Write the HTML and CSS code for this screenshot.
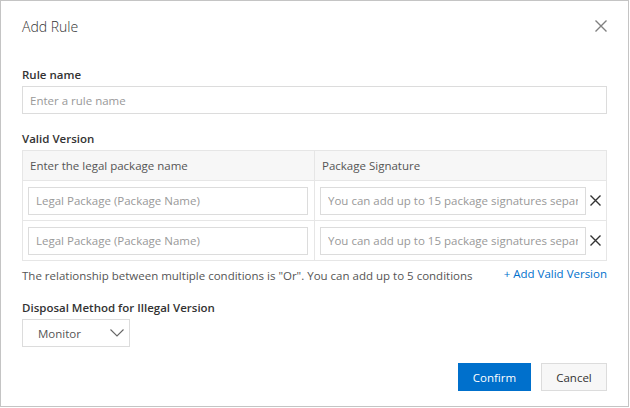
FILE: index.html
```html
<!DOCTYPE html>
<html lang="en">
<head>
    <meta charset="UTF-8">
    <title>Add Rule</title>
    <link rel="stylesheet" href="styles.css">
</head>
<body>
    <div class="dialog">
        <!-- Header -->
        <div class="dialog-header">
            <span class="dialog-title">Add Rule</span>
            <svg class="close-icon" width="12" height="12" viewBox="0 0 12 12">
                <path d="M0.5 0.5 L11.5 11.5 M11.5 0.5 L0.5 11.5" stroke="#808080" stroke-width="1.4" fill="none"/>
            </svg>
        </div>

        <!-- Body -->
        <div class="dialog-body">
            <div class="form-label">Rule name</div>
            <input class="text-input" type="text" placeholder="Enter a rule name">

            <div class="form-label label-version">Valid Version</div>
            <div class="version-table">
                <div class="table-row table-head">
                    <div class="cell cell-left">Enter the legal package name</div>
                    <div class="cell cell-right">Package Signature</div>
                </div>
                <div class="table-row">
                    <div class="cell cell-left">
                        <input class="text-input" type="text" placeholder="Legal Package (Package Name)">
                    </div>
                    <div class="cell cell-right">
                        <input class="text-input" type="text" placeholder="You can add up to 15 package signatures separated by commas">
                        <svg class="row-remove" width="11" height="11" viewBox="0 0 11 11">
                            <path d="M0.5 0.5 L10.5 10.5 M10.5 0.5 L0.5 10.5" stroke="#333" stroke-width="1.4" fill="none"/>
                        </svg>
                    </div>
                </div>
                <div class="table-row">
                    <div class="cell cell-left">
                        <input class="text-input" type="text" placeholder="Legal Package (Package Name)">
                    </div>
                    <div class="cell cell-right">
                        <input class="text-input" type="text" placeholder="You can add up to 15 package signatures separated by commas">
                        <svg class="row-remove" width="11" height="11" viewBox="0 0 11 11">
                            <path d="M0.5 0.5 L10.5 10.5 M10.5 0.5 L0.5 10.5" stroke="#333" stroke-width="1.4" fill="none"/>
                        </svg>
                    </div>
                </div>
            </div>
            <div class="help-row">
                <span class="help-text">The relationship between multiple conditions is "Or". You can add up to 5 conditions</span>
                <a class="add-link" href="#">+ Add Valid Version</a>
            </div>

            <div class="form-label label-disposal">Disposal Method for Illegal Version</div>
            <div class="select-box">
                <span>Monitor</span>
                <svg width="14" height="8" viewBox="0 0 14 8">
                    <path d="M0.5 0.5 L7 7 L13.5 0.5" stroke="#666" stroke-width="1.1" fill="none"/>
                </svg>
            </div>
        </div>

        <!-- Footer -->
        <div class="dialog-footer">
            <button class="btn btn-primary">Confirm</button>
            <button class="btn btn-normal">Cancel</button>
        </div>
    </div>
</body>
</html>
```

FILE: styles.css
```css
/* General Styles */
html, body {
    margin: 0;
    padding: 0;
    background: #fff;
}
body {
    font-family: "Open Sans", "Noto Sans", sans-serif;
    font-size: 11.5px;
    color: #333;
}

/* Dialog */
.dialog {
    width: 629px;
    height: 407px;
    box-sizing: border-box;
    border: 1px solid #c4c4c4;
    background: #fff;
    display: flex;
    flex-direction: column;
}
.dialog-header {
    display: flex;
    justify-content: space-between;
    align-items: flex-start;
    padding: 16px 21px 0 21px;
    height: 37px;
}
.dialog-title {
    font-size: 14px;
    line-height: 20px;
    font-weight: 300;
    color: #333;
}
.close-icon {
    margin-top: 3px;
}

/* Body */
.dialog-body {
    flex: 1;
    padding: 12px 21px 0 21px;
    display: flex;
    flex-direction: column;
    align-items: flex-start;
}
.form-label {
    font-weight: 600;
    line-height: 18px;
    margin-bottom: 2px;
}
.label-version {
    margin-top: 16px;
    margin-bottom: 2px;
}
.label-disposal {
    margin-top: 14px;
}
.text-input {
    box-sizing: border-box;
    width: 100%;
    height: 28px;
    border: 1px solid #dcdcdc;
    padding: 0 7px;
    font-family: inherit;
    font-size: 11.5px;
    color: #333;
    outline: none;
}
.text-input::placeholder {
    color: #999;
}

/* Version table */
.version-table {
    width: 100%;
    border: 1px solid #e6e6e6;
    box-sizing: border-box;
}
.table-row {
    display: flex;
    height: 39px;
    border-top: 1px solid #e6e6e6;
}
.table-row.table-head {
    height: 29px;
    border-top: none;
    background: #f7f7f7;
    color: #555;
}
.cell {
    display: flex;
    align-items: center;
    box-sizing: border-box;
}
.cell-left {
    width: 292px;
    padding: 0 6px 0 5px;
    border-right: 1px solid #e6e6e6;
}
.table-head .cell {
    padding-left: 7px;
}
.cell-right {
    flex: 1;
    padding: 0 5px 0 5px;
    gap: 4px;
}
.row-remove {
    flex: none;
}

/* Help row */
.help-row {
    width: 100%;
    display: flex;
    justify-content: space-between;
    margin-top: 6px;
    line-height: 18px;
}
.help-text {
    color: #555;
}
.add-link {
    color: #0070cc;
    text-decoration: none;
    position: relative;
    top: -2px;
}

/* Select */
.select-box {
    box-sizing: border-box;
    width: 108px;
    height: 28px;
    border: 1px solid #dcdcdc;
    display: flex;
    align-items: center;
    justify-content: space-between;
    padding: 0 5px 0 15px;
    color: #555;
}

/* Footer */
.dialog-footer {
    display: flex;
    justify-content: flex-end;
    gap: 10px;
    padding: 0 21px 15px 21px;
}
.btn {
    height: 28px;
    font-family: inherit;
    font-size: 11.5px;
    border: 1px solid transparent;
    padding: 0;
    cursor: pointer;
}
.btn-primary {
    width: 73px;
    background: #0070cc;
    border-color: #0070cc;
    color: #fff;
}
.btn-normal {
    width: 66px;
    background: #f7f7f7;
    border-color: #dcdcdc;
    color: #333;
}
```
